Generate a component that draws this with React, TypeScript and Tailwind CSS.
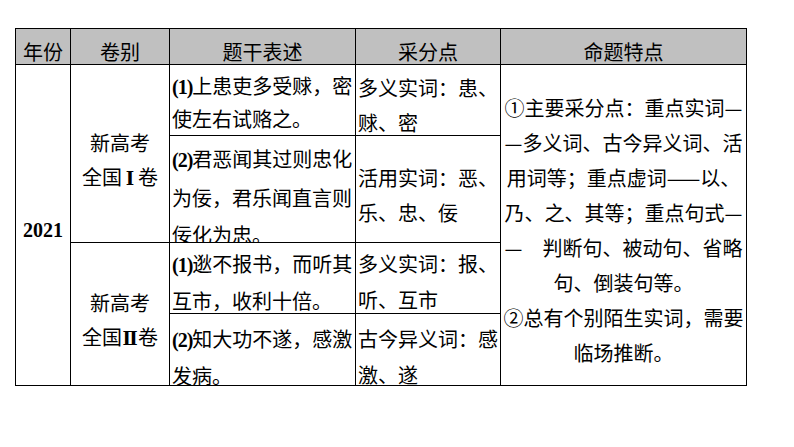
import React from 'react';

function Num({ children }: { children: React.ReactNode }) {
  return <span className="font-['Liberation_Serif',serif] font-bold tracking-[-1px]">{children}</span>;
}

function Roman({ children }: { children: React.ReactNode }) {
  return (
    <span className="inline-block w-[16px] text-center font-['DejaVu_Serif','Liberation_Serif',serif] font-bold text-[18px]">
      {children}
    </span>
  );
}

const headers = ['年份', '卷别', '题干表述', '采分点', '命题特点'];

const features = [
  '①主要采分点：重点实词—',
  '—多义词、古今异义词、活',
  '用词等；重点虚词——以、',
  '乃、之、其等；重点句式—',
  '—\u3000判断句、被动句、省略',
  '句、倒装句等。',
  '②总有个别陌生实词，需要',
  '临场推断。',
];

export default function App() {
  return (
    <div className="w-[794px] h-[447px] bg-white pt-[28px] pl-[15px] text-black text-[20px] font-['Noto_Sans_CJK_SC',sans-serif]">
      <div className="grid w-fit grid-cols-[54px_98px_185px_144px_245px] grid-rows-[35px_70px_106px_70px_71px] gap-px bg-black p-px">
        {headers.map((h) => (
          <div key={h} className="flex items-center justify-center bg-[#c0c0c0] pt-[10px] leading-[24px]">
            {h}
          </div>
        ))}

        {/* year */}
        <div className="row-span-4 row-start-2 col-start-1 flex items-center justify-center bg-white pt-[10px]">
          <span className="font-['Liberation_Serif',serif] font-bold leading-[30px]">2021</span>
        </div>

        {/* paper I */}
        <div className="row-span-2 row-start-2 col-start-2 flex flex-col items-center bg-white pt-[61px] leading-[34px]">
          <div>新高考</div>
          <div className="whitespace-nowrap">
            全国<Roman>Ⅰ</Roman>卷
          </div>
        </div>

        <div className="row-start-2 col-start-3 bg-white pl-[2px] pt-[5px] leading-[31px] whitespace-nowrap">
          <div>
            <Num>(1)</Num>上患吏多受赇，密
          </div>
          <div>使左右试赂之。</div>
        </div>
        <div className="row-start-2 col-start-4 bg-white pl-[2px] pt-[5px] leading-[35px] whitespace-nowrap">
          <div>多义实词：患、</div>
          <div>赇、密</div>
        </div>

        {/* features */}
        <div className="row-span-4 row-start-2 col-start-5 flex flex-col items-center bg-white pt-[25px] leading-[35px] whitespace-nowrap">
          {features.map((line) => (
            <div key={line}>{line}</div>
          ))}
        </div>

        <div className="row-start-3 col-start-3 bg-white pl-[2px] pt-[4px] leading-[37px] whitespace-nowrap">
          <div>
            <Num>(2)</Num>君恶闻其过则忠化
          </div>
          <div>为佞，君乐闻直言则</div>
          <div>佞化为忠。</div>
        </div>
        <div className="row-start-3 col-start-4 bg-white pl-[2px] pt-[24px] leading-[35px] whitespace-nowrap">
          <div>活用实词：恶、</div>
          <div>乐、忠、佞</div>
        </div>

        {/* paper II */}
        <div className="row-span-2 row-start-4 col-start-2 flex flex-col items-center bg-white pt-[43px] leading-[34px]">
          <div>新高考</div>
          <div className="whitespace-nowrap">
            全国<Roman>Ⅱ</Roman>卷
          </div>
        </div>

        <div className="row-start-4 col-start-3 bg-white pl-[2px] pt-[3px] leading-[36px] whitespace-nowrap">
          <div>
            <Num>(1)</Num>逖不报书，而听其
          </div>
          <div>互市，收利十倍。</div>
        </div>
        <div className="row-start-4 col-start-4 bg-white pl-[2px] pt-[3px] leading-[36px] whitespace-nowrap">
          <div>多义实词：报、</div>
          <div>听、互市</div>
        </div>

        <div className="row-start-5 col-start-3 bg-white pl-[2px] pt-[7px] leading-[36px] whitespace-nowrap">
          <div>
            <Num>(2)</Num>知大功不遂，感激
          </div>
          <div>发病。</div>
        </div>
        <div className="row-start-5 col-start-4 bg-white pl-[2px] pt-[7px] leading-[36px] whitespace-nowrap">
          <div>古今异义词：感</div>
          <div>激、遂</div>
        </div>
      </div>
    </div>
  );
}
